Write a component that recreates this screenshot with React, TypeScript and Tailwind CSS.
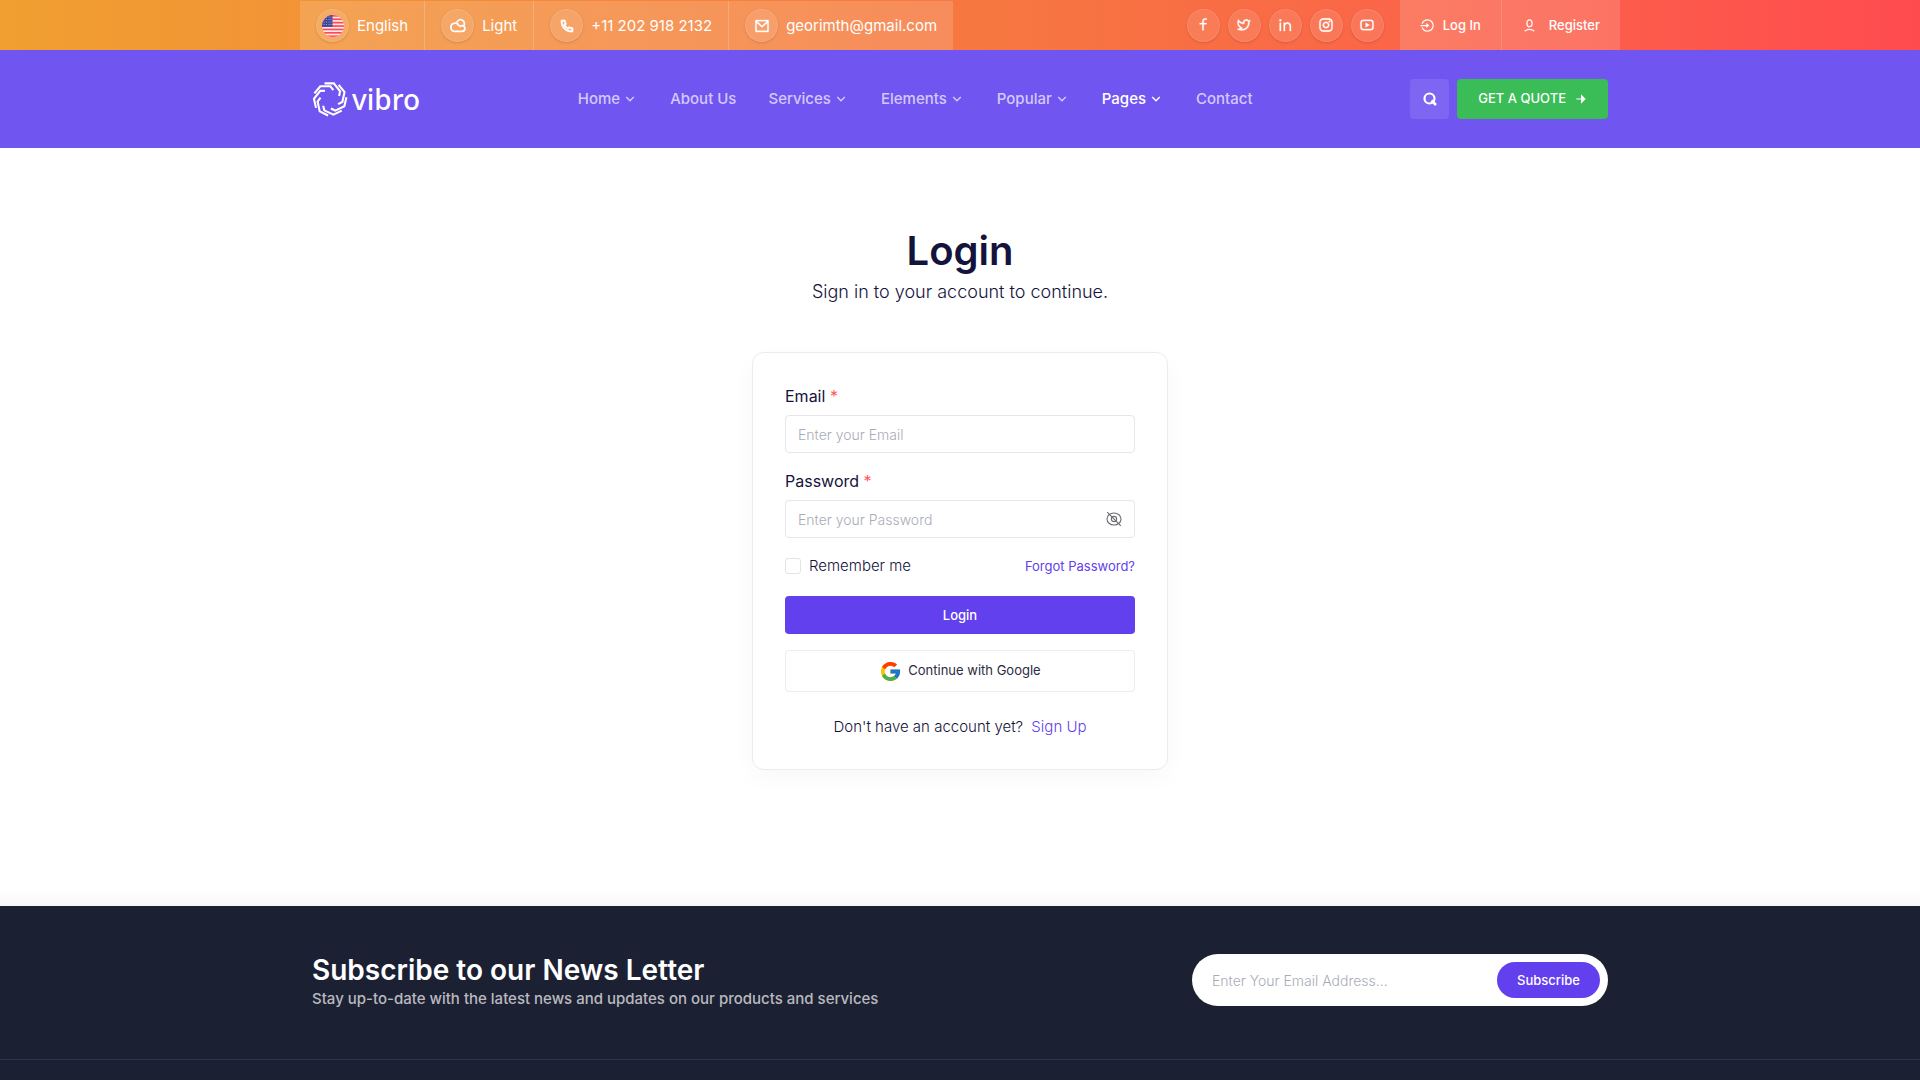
// React Imports
import { useState, type ReactNode } from "react"

// Icon Imports
import {
    RiArrowDownSLine,
    RiArrowRightFill,
    RiFacebookLine,
    RiInstagramLine,
    RiLinkedinLine,
    RiLoginCircleLine,
    RiMailLine,
    RiPhoneLine,
    RiTwitterLine,
    RiUser6Line,
    RiYoutubeLine,
} from "react-icons/ri"
import { FcGoogle } from "react-icons/fc"

const socials = [
    { name: "Facebook", icon: RiFacebookLine },
    { name: "Twitter", icon: RiTwitterLine },
    { name: "LinkedIn", icon: RiLinkedinLine },
    { name: "Instagram", icon: RiInstagramLine },
    { name: "YouTube", icon: RiYoutubeLine },
];

const navItems = [
    { label: "Home", menu: true },
    { label: "About Us" },
    { label: "Services", menu: true },
    { label: "Elements", menu: true },
    { label: "Popular", menu: true },
    { label: "Pages", menu: true, active: true },
    { label: "Contact" },
];

const blades = [0, 51, 103, 154, 206, 257, 309];

function Logo() {
    return (
        <a href="#" className="flex items-center gap-1 text-white" aria-label="vibro">
            <svg viewBox="0 0 36 36" className="size-9" fill="none" stroke="currentColor" strokeWidth="2.1">
                {blades.map((angle) => (
                    <path key={angle} transform={`rotate(${angle} 18 18)`} d="M12.5 2.4H21.8L28.1 10.3L27.1 15" />
                ))}
            </svg>
            <span className="font-['Noto_Sans',sans-serif] text-[28px] leading-8 font-medium">vibro</span>
        </a>
    )
}

function UsFlag() {
    return (
        <svg viewBox="0 0 22 22" className="size-[22px]">
            <defs>
                <clipPath id="flag">
                    <circle cx="11" cy="11" r="11" />
                </clipPath>
            </defs>
            <g clipPath="url(#flag)">
                <rect width="22" height="22" fill="#ffe9e9" />
                {[0, 1, 2, 3, 4, 5, 6].map((i) => (
                    <rect key={i} y={i * 3.4} width="22" height="1.7" fill="#ff4b55" />
                ))}
                <rect width="10.5" height="11.9" fill="#41479b" />
                {[2, 4.5, 7, 9.5].map((y) =>
                    [2, 4.5, 7, 9].map((x) => <circle key={`${x}-${y}`} cx={x} cy={y} r="0.5" fill="#b9bbe0" />)
                )}
            </g>
        </svg>
    )
}

function Cloudy() {
    return (
        <svg viewBox="0 0 16 16" className="size-4" fill="none" stroke="currentColor" strokeWidth="1.7">
            <path d="M5 13.4A4.1 4.1 0 1 1 8.9 8" />
            <path d="M5 13.4H12A2.9 2.9 0 0 0 12 7.6A3 3 0 0 0 9.4 9.2" />
            <path d="M6.8 4.4A3.9 3.9 0 1 1 13.6 8" />
        </svg>
    )
}

function EyeOff() {
    return (
        <svg viewBox="0 0 16 16" className="size-4" fill="none" stroke="currentColor" strokeWidth="1.1">
            <ellipse cx="8" cy="8" rx="7" ry="6" />
            <circle cx="8" cy="8" r="2.6" />
            <path d="M1.2 1.2L14.8 14.8" />
        </svg>
    )
}

function Circle({ children }: { children: ReactNode }) {
    return (
        <span className="flex size-[33px] shrink-0 items-center justify-center rounded-full border border-white/10 bg-white/10 text-white shadow-sm">
            {children}
        </span>
    )
}

function TopItem({ icon, label, last }: { icon: ReactNode; label: string; last?: boolean }) {
    return (
        <a href="#" className={`flex items-center gap-2 px-4 ${last ? "" : "border-r border-white/20"}`}>
            <Circle>{icon}</Circle>
            {label}
        </a>
    )
}

function TopBar() {
    return (
        <div className="bg-linear-to-r from-[#f09f30] via-[#f67840] to-[#ff4b4f] text-white">
            <div className="mx-auto flex h-[50px] max-w-[1320px] justify-between">
                <div className="mt-px flex bg-white/15 text-[15px] leading-[25px]">
                    <TopItem icon={<UsFlag />} label="English" />
                    <TopItem icon={<Cloudy />} label="Light" />
                    <TopItem icon={<RiPhoneLine size={16} strokeWidth={1} />} label="+11 202 918 2132" />
                    <TopItem icon={<RiMailLine size={16} strokeWidth={0.5} />} label="georimth@gmail.com" last />
                </div>
                <div className="flex items-center gap-4">
                    <div className="flex gap-2">
                        {socials.map(({ name, icon: Icon }) => (
                            <a key={name} href="#" aria-label={name}>
                                <Circle><Icon size={16} strokeWidth={0.5} /></Circle>
                            </a>
                        ))}
                    </div>
                    <div className="flex h-full bg-white/15 text-[13px] leading-[21px] font-medium">
                        <a href="#" className="flex items-center gap-2 border-r border-white/15 px-5">
                            <RiLoginCircleLine size={15} />
                            Log In
                        </a>
                        <a href="#" className="flex items-center gap-3 px-5">
                            <RiUser6Line size={15} />
                            Register
                        </a>
                    </div>
                </div>
            </div>
        </div>
    )
}

function Header() {
    return (
        <header className="bg-[#7155f0]">
            <div className="mx-auto flex h-[98px] max-w-[1320px] items-center justify-between px-3">
                <Logo />
                <nav className="flex gap-8 text-[15px] font-medium">
                    {navItems.map((item) => (
                        <a key={item.label} href="#" className={`flex items-center gap-0.5 ${item.active ? "text-white" : "text-white/70"}`}>
                            {item.label}
                            {item.menu && <RiArrowDownSLine size={16} />}
                        </a>
                    ))}
                </nav>
                <div className="flex gap-2">
                    <button type="button" aria-label="Search" className="flex h-10 w-[39px] items-center justify-center rounded bg-white/10 text-white">
                        <svg viewBox="0 0 14 14" className="size-3.5" fill="none" stroke="currentColor" strokeWidth="2.2">
                            <circle cx="6.5" cy="6.5" r="5" />
                            <path d="M8.5 8.5L13 13" strokeWidth="2.6" />
                        </svg>
                    </button>
                    <a href="#" className="flex h-10 items-center gap-2 rounded bg-[#3abc56] pr-5 pl-[21px] text-[13px] font-medium text-white">
                        GET A QUOTE
                        <RiArrowRightFill size={14} />
                    </a>
                </div>
            </div>
        </header>
    )
}

function LoginForm() {
    const [showPassword, setShowPassword] = useState<boolean>(false);

    return (
        <form className="w-full max-w-[416px] rounded-xl border border-[#ebebf0] bg-white p-8 shadow-[0_8px_24px_rgba(0,0,0,0.03)]" onSubmit={(e) => e.preventDefault()}>
            <label htmlFor="email" className="block text-[16px] leading-[22px] text-[#14133b]">
                Email <span className="text-[#ff5b5b]">*</span>
            </label>
            <input
                id="email"
                type="email"
                placeholder="Enter your Email"
                className="mt-2 block h-[38px] w-full rounded border border-[#e6e6ea] px-3 pt-px text-[14px] font-light placeholder:text-[#a9acb8]"
            />
            <label htmlFor="password" className="mt-[17px] block text-[16px] leading-[22px] text-[#14133b]">
                Password <span className="text-[#ff5b5b]">*</span>
            </label>
            <div className="mt-2 flex h-[38px] items-center rounded border border-[#e6e6ea] px-3">
                <input
                    id="password"
                    type={showPassword ? "text" : "password"}
                    placeholder="Enter your Password"
                    className="min-w-0 flex-1 pt-px text-[14px] font-light placeholder:text-[#a9acb8]"
                />
                <button type="button" aria-label="Show password" className="text-[#6b6b73]" onClick={() => setShowPassword(!showPassword)}>
                    <EyeOff />
                </button>
            </div>
            <div className="mt-4 flex items-center justify-between">
                <label className="flex items-center gap-2 text-[15px] leading-6 font-light text-[#14133b]">
                    <input type="checkbox" className="size-4 appearance-none rounded-[3px] border border-[#e3e3e8]" />
                    Remember me
                </label>
                <a href="#" className="pt-px text-[13px] text-[#6240ee]">Forgot Password?</a>
            </div>
            <button type="submit" className="mt-[18px] block h-[38px] w-full rounded bg-[#6240ee] pt-px text-[13px] font-medium text-white">
                Login
            </button>
            <button type="button" className="mt-4 flex h-[42px] w-full items-center justify-center gap-1.5 rounded border border-[#ebebf0] text-[13px] text-[#2c2b3f]">
                <FcGoogle size={23} />
                Continue with Google
            </button>
            <p className="mt-6 text-center text-[15px] leading-[21px] font-light text-[#14133b]">
                Don't have an account yet? <a href="#" className="ml-1 text-[#6240ee]">Sign Up</a>
            </p>
        </form>
    )
}

function Footer() {
    return (
        <footer className="min-h-[174px] flex-1 bg-[#1c2033]">
            <div className="border-b border-[#30344a]">
                <div className="mx-auto flex max-w-[1320px] items-start justify-between px-3 py-12">
                    <div>
                        <h2 className="text-[28px] leading-8 font-semibold text-white">Subscribe to our News Letter</h2>
                        <p className="text-[15px] leading-[25px] font-medium text-white/70">Stay up-to-date with the latest news and updates on our products and services</p>
                    </div>
                    <form className="flex h-[52px] w-[416px] items-center rounded-full bg-white pr-2 pl-5" onSubmit={(e) => e.preventDefault()}>
                        <input
                            type="email"
                            aria-label="Email address"
                            placeholder="Enter Your Email Address..."
                            className="min-w-0 flex-1 text-[14px] font-light placeholder:text-[#a9acb8]"
                        />
                        <button type="submit" className="h-9 rounded-full bg-[#6240ee] px-5 pt-px text-[13px] font-medium text-white">Subscribe</button>
                    </form>
                </div>
            </div>
        </footer>
    )
}

export default function LoginPage() {
    return (
        <div className="flex min-h-screen flex-col overflow-hidden bg-white font-['Inter',sans-serif]">
            <TopBar />
            <Header />
            <main className="flex flex-col items-center bg-linear-to-t from-black/3 to-transparent to-[16px] px-3 pt-[77px] pb-[136px]">
                <h1 className="text-[40px] leading-[52px] font-semibold text-[#14133b]">Login</h1>
                <p className="mt-0.5 mb-[47px] text-[18px] leading-[26px] font-light text-[#14133b]">Sign in to your account to continue.</p>
                <LoginForm />
            </main>
            <Footer />
        </div>
    )
}
